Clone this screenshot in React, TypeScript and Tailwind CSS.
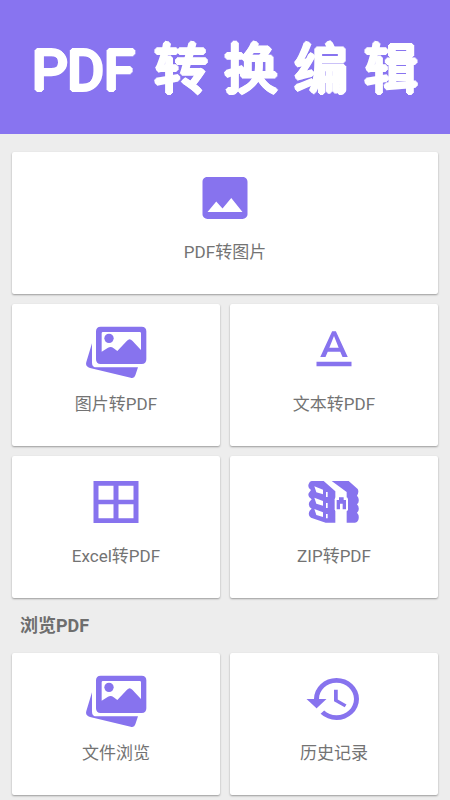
import type { ReactNode } from "react";
import {
  MdBorderAll,
  MdHistory,
  MdPhoto,
  MdTextFormat,
} from "react-icons/md";

// 重ねた写真のアイコン
function PhotosIcon() {
  return (
    <svg className="w-16 h-14" viewBox="42 21 192 168" fill="currentColor" aria-hidden="true">
      <path d="M66 85V143Q66 157 80 157H204L196 181Q193 191 182 188L60 159Q45 155 49 141Z" />
      <path
        fillRule="evenodd"
        d="M92 35H215Q229 35 229 49V133Q229 147 215 147H92Q78 147 78 133V49Q78 35 92 35ZM99 51Q95 51 95 55V110L114 98Q123 93 131 100L142 108L171 77Q179 68 187 77L213 105V55Q213 51 209 51Z"
      />
      <circle cx="117" cy="70" r="14" />
    </svg>
  );
}

// ZIP のアイコン
function ZipIcon() {
  return (
    <svg className="w-16 h-14" viewBox="-9 -12 192 168" fill="currentColor" aria-hidden="true">
      <path d="M20 9H56L91 40V134H62L18 119Q7 112 14 98L20 92Q8 86 13 72L20 64Q7 57 11 46L18 36Q7 30 11 18Q14 9 20 9Z" />
      <path d="M80 9H131L158 33Q163 42 156 53Q164 61 160 74L156 79Q164 87 160 99L156 104Q164 112 160 126Q157 134 150 134H125V42Z" />
      <g fill="white">
        <path d="M28 25L54 35V49L34 43Z" />
        <path d="M28 59L54 69V83L34 77Z" />
        <path d="M28 93L54 103V117L34 111Z" />
        <path d="M63 42H68V57H63ZM63 75H68V90H63ZM63 108H68V121H63Z" />
        <rect x="89" y="58" width="40" height="42" rx="6" />
      </g>
      <path d="M95 66H102V58H116V66H123V94H113V77H105V94H95Z" />
    </svg>
  );
}

const mdIcon = "w-15 h-14";

type CardProps = { label: string; icon: ReactNode; wide?: boolean };

function Card({ label, icon, wide }: CardProps) {
  return (
    <button
      type="button"
      className={`flex flex-col items-center bg-white rounded-xs shadow-[0_1px_2px_rgba(0,0,0,0.35)] pt-[18px] pb-[30px] ${wide ? "col-span-2" : ""}`}
    >
      <span className="flex h-14 text-[#8773ee]">{icon}</span>
      <span className="mt-[14px] text-[17px] leading-6 text-[#737373]">{label}</span>
    </button>
  );
}

export default function App() {
  return (
    <div className="min-h-screen bg-[#ededed] font-['Roboto','Noto_Sans_CJK_SC',sans-serif]">
      <header className="bg-[#8874f0] px-8 pt-10 pb-8">
        {/* 影を重ねて丸みのある太字にする */}
        <h1 className="flex items-center justify-between leading-[62px] text-white [text-shadow:2px_0_white,-2px_0_white,0_2px_white,0_-2px_white,1px_1px_white,-1px_1px_white,1px_-1px_white,-1px_-1px_white]">
          <span className="text-[56px]">PDF</span>
          <span className="flex gap-4 text-[54px]">
            {["转", "换", "编", "辑"].map((c) => (
              <span key={c}>{c}</span>
            ))}
          </span>
        </h1>
      </header>

      <main className="px-3 pt-[18px]">
        <section className="grid grid-cols-2 gap-[10px]">
          <Card wide label="PDF转图片" icon={<MdPhoto className={mdIcon} preserveAspectRatio="none" />} />
          <Card label="图片转PDF" icon={<PhotosIcon />} />
          <Card label="文本转PDF" icon={<MdTextFormat className={mdIcon} preserveAspectRatio="none" />} />
          <Card label="Excel转PDF" icon={<MdBorderAll className={mdIcon} preserveAspectRatio="none" />} />
          <Card label="ZIP转PDF" icon={<ZipIcon />} />
        </section>

        <h2 className="px-2 pt-4 pb-[15px] text-lg leading-6 font-bold text-[#6e6e6e]">浏览PDF</h2>

        <section className="grid grid-cols-2 gap-[10px]">
          <Card label="文件浏览" icon={<PhotosIcon />} />
          <Card label="历史记录" icon={<MdHistory className={mdIcon} preserveAspectRatio="none" />} />
        </section>
      </main>
    </div>
  );
}
